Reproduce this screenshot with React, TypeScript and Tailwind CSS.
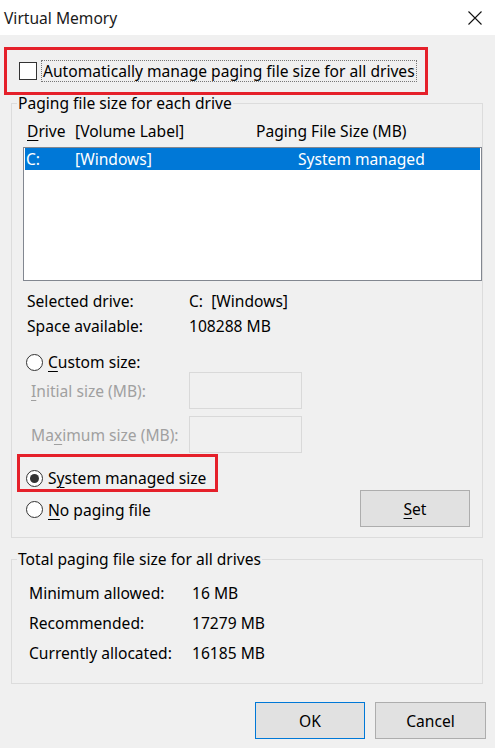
import React from "react";

const Radio = ({ checked }: { checked?: boolean }) => (
  <span className="w-[17px] h-[17px] rounded-full border border-[#333333] bg-white flex items-center justify-center shrink-0">
    {checked && <span className="w-[9px] h-[9px] rounded-full bg-[#333333]" />}
  </span>
);

const U = ({ children }: { children: React.ReactNode }) => (
  <span className="underline underline-offset-[3px] decoration-1">{children}</span>
);

export default function App() {
  return (
    <div className="w-[499px] h-[748px] bg-white text-[15.6px] text-black overflow-hidden" style={{ fontFamily: '"Noto Sans", "Open Sans", sans-serif' }}>
      <div className="h-[35px] w-[499px] bg-white flex items-center justify-between pl-[4px] pr-[17px]">
        <span className="text-[15.6px] leading-[20px] text-[#1a1a1a]">Virtual Memory</span>
        <svg width="14" height="14" viewBox="0 0 14 14" className="mr-0">
          <path d="M0.5 0.5 L13.5 13.5 M13.5 0.5 L0.5 13.5" stroke="#111" strokeWidth="1.1" fill="none" />
        </svg>
      </div>
      <div className="w-[495px] h-[713px] bg-[#f0f0f0] flex flex-col pl-[11px]">
        {/* red box 1 */}
        <div className="ml-[-7px] mt-[12px] w-[424px] h-[48px] border-[3px] border-[#e5202a] flex items-center pl-[12px]">
          <span className="w-[18px] h-[18px] border border-[#333333] bg-white shrink-0" />
          <span className="ml-[4px] leading-[20px] px-[1px] border border-dotted border-[#777] whitespace-nowrap">Automatically manage paging file size for all drives</span>
        </div>

        {/* fieldset 1 */}
        <fieldset className="w-[472px] border border-[#dcdcdc] pb-[10px] flex flex-col">
          <legend className="ml-[5px] px-[1px] leading-[16px]">Paging file size for each drive</legend>
          <div className="mt-[10px] h-[20px] leading-[20px] flex pl-[15px]">
            <span className="w-[48px]"><U>D</U>rive</span>
            <span className="w-[181px]">[Volume Label]</span>
            <span>Paging File Size (MB)</span>
          </div>
          <div className="mt-[6px] ml-[11px] h-[134px] border border-[#828790] bg-white">
            <div className="mx-[1px] h-[22px] bg-[#0078d7] text-white flex items-center leading-[20px] pl-[1px]">
              <span className="w-[49px]">C:</span>
              <span className="w-[223px]">[Windows]</span>
              <span>System managed</span>
            </div>
          </div>
          <div className="mt-[10px] h-[20px] leading-[20px] flex pl-[15px]">
            <span className="w-[162px]">Selected drive:</span>
            <span>C:&nbsp;&nbsp;[Windows]</span>
          </div>
          <div className="mt-[5px] h-[20px] leading-[20px] flex pl-[15px]">
            <span className="w-[162px]">Space available:</span>
            <span>108288 MB</span>
          </div>
          <div className="mt-[16px] h-[20px] flex items-center pl-[14px]">
            <Radio />
            <span className="ml-[5px] leading-[20px]"><U>C</U>ustom size:</span>
          </div>
          <div className="h-[37px] flex items-center pl-[19px] text-[#a0a0a0]">
            <span className="w-[158px] leading-[20px]"><U>I</U>nitial size (MB):</span>
            <div className="w-[113px] h-[37px] border border-[#d9d9d9]" />
          </div>
          <div className="mt-[7px] h-[37px] flex items-center pl-[19px] text-[#a0a0a0]">
            <span className="w-[158px] leading-[20px]">Ma<U>x</U>imum size (MB):</span>
            <div className="w-[113px] h-[37px] border border-[#d9d9d9]" />
          </div>
          {/* red box 2 */}
          <div className="mt-[1px] ml-[5px] w-[201px] h-[38px] border-[3px] border-[#e5202a] flex items-start pt-[11px] pl-[6px]">
            <div className="h-[20px] flex items-center">
              <Radio checked />
              <span className="ml-[5px] leading-[20px] whitespace-nowrap">S<U>y</U>stem managed size</span>
            </div>
          </div>
          <div className="mt-[-2px] h-[37px] flex items-center justify-between pl-[14px] pr-[12px]">
            <div className="flex items-center mt-[2px]">
              <Radio />
              <span className="ml-[5px] leading-[20px]"><U>N</U>o paging file</span>
            </div>
            <div className="w-[110px] h-[37px] border border-[#adadad] bg-[#e1e1e1] flex items-center justify-center leading-[20px]">
              <U>S</U>et
            </div>
          </div>
        </fieldset>

        {/* fieldset 2 */}
        <fieldset className="mt-[13px] w-[472px] border border-[#dcdcdc] pb-[15px] flex flex-col">
          <legend className="ml-[5px] px-[1px] leading-[16px]">Total paging file size for all drives</legend>
          <div className="mt-[11px] h-[30px] flex items-center pl-[17px] leading-[20px]">
            <span className="w-[163px]">Minimum allowed:</span>
            <span>16 MB</span>
          </div>
          <div className="h-[30px] flex items-center pl-[17px] leading-[20px]">
            <span className="w-[163px]">Recommended:</span>
            <span>17279 MB</span>
          </div>
          <div className="h-[30px] flex items-center pl-[17px] leading-[20px]">
            <span className="w-[163px]">Currently allocated:</span>
            <span>16185 MB</span>
          </div>
        </fieldset>

        <div className="mt-[18px] flex justify-end gap-[10px] pr-[9px]">
          <div className="w-[110px] h-[37px] border border-[#0078d7] bg-[#e1e1e1] flex items-center justify-center leading-[20px]">OK</div>
          <div className="w-[111px] h-[37px] border border-[#adadad] bg-[#e1e1e1] flex items-center justify-center leading-[20px]">Cancel</div>
        </div>
      </div>
    </div>
  );
}
